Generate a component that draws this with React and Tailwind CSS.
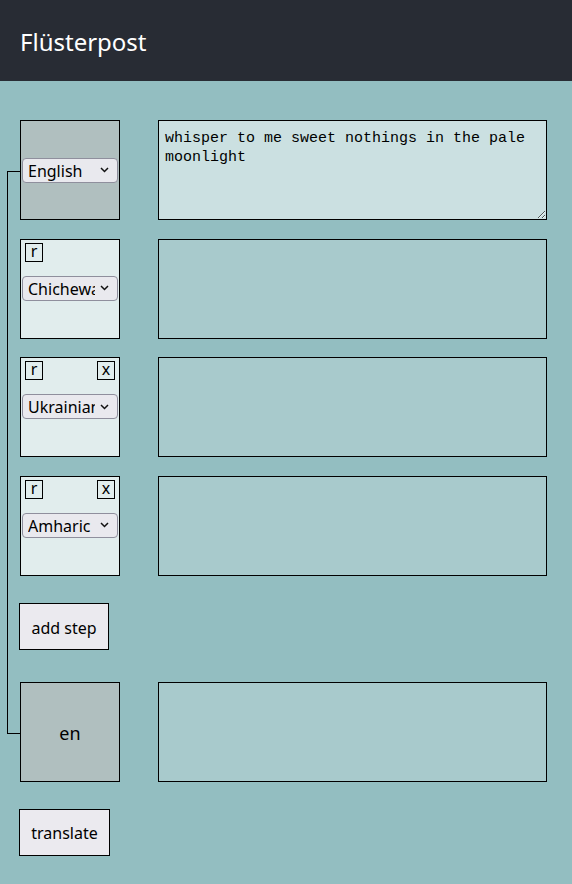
import React, { useState } from 'react';

const LANGS = ['English', 'Chichewa', 'Ukrainian', 'Amharic', 'German', 'French', 'Japanese'];

const Chevron = () => (
    <svg className="pointer-events-none absolute right-[9px] top-1/2 -translate-y-1/2" width="9" height="6" viewBox="0 0 9 6" fill="none">
        <path d="M1 1l3.5 3.5L8 1" stroke="#111" strokeWidth="1.5" />
    </svg>
);

const LangSelect = ({ value, onChange }) => (
    <div className="relative w-[96px]">
        <select
            value={value}
            onChange={(e) => onChange(e.target.value)}
            className="appearance-none w-full h-[25px] pl-[5px] pr-[22px] pt-px text-[16px] leading-[22px] bg-[#e9e9ee] border border-[#8f8f9d] rounded-[4px] text-black"
        >
            {LANGS.map((l) => (
                <option key={l} value={l}>{l}</option>
            ))}
        </select>
        <Chevron />
    </div>
);

const SmallBtn = ({ children }) => (
    <button className="w-[18px] h-[19px] border border-black text-[16px] leading-[15px] flex items-center justify-center pb-[2px] text-black">
        {children}
    </button>
);

export default function App() {
    const [source, setSource] = useState('English');
    const [steps, setSteps] = useState(['Chichewa', 'Ukrainian', 'Amharic']);
    const [text, setText] = useState('whisper to me sweet nothings in the pale moonlight');

    return (
        <div className="min-h-[884px] bg-[#93bec1] font-['Noto_Sans','Open_Sans',sans-serif] text-black">
            {/* header */}
            <header className="h-[81px] bg-[#282c34] flex items-center pl-5">
                <h1 className="text-[24px] text-white pt-[3px]">Flüsterpost</h1>
            </header>

            <main className="relative pl-[19px] pt-[39px] pb-[28px]">
                {/* connector line */}
                <div className="absolute left-[7px] top-[90px] w-[13px] h-[563px] border-l border-t border-b border-black" />

                <div className="flex flex-col gap-[18.67px]">
                    {/* source row */}
                    <div className="flex gap-[38px] ml-px">
                        <div className="w-[100px] h-[100px] border border-black bg-[#b0bfbf] flex items-center justify-center">
                            <LangSelect value={source} onChange={setSource} />
                        </div>
                        <textarea
                            value={text}
                            onChange={(e) => setText(e.target.value)}
                            className="w-[389px] h-[100px] border border-black bg-[#cbe0e1] px-[6px] pt-[8px] font-['Liberation_Mono',monospace] text-[15px] leading-[19px] outline-none"
                        />
                    </div>

                    {steps.map((lang, i) => (
                        <div key={i} className="flex gap-[38px] ml-px">
                            <div className="w-[100px] h-[100px] border border-black bg-[#e1eded] flex flex-col">
                                <div className="flex justify-between mt-[3px] mx-[4px]">
                                    <SmallBtn>r</SmallBtn>
                                    {i > 0 && <SmallBtn>x</SmallBtn>}
                                </div>
                                <div className="mt-[14px] ml-px">
                                    <LangSelect
                                        value={lang}
                                        onChange={(v) => setSteps((prev) => prev.map((p, j) => (j === i ? v : p)))}
                                    />
                                </div>
                            </div>
                            <div className="w-[389px] h-[100px] border border-black bg-[#a8cacc]" />
                        </div>
                    ))}
                </div>

                <button
                    onClick={() => setSteps((prev) => [...prev, 'German'])}
                    className="mt-[27px] w-[90px] h-[47px] pt-[3px] border border-black bg-[#ebeaef] text-[16px]"
                >
                    add step
                </button>

                <div className="flex gap-[38px] ml-px mt-[32px]">
                    <div className="w-[100px] h-[100px] pt-[3px] border border-black bg-[#b0bfbf] flex items-center justify-center text-[18px]">
                        en
                    </div>
                    <div className="w-[389px] h-[100px] border border-black bg-[#a8cacc]" />
                </div>

                <button className="block mt-[27px] w-[91px] h-[47px] pt-[2px] border border-black bg-[#ebeaef] text-[16px]">
                    translate
                </button>
            </main>
        </div>
    );
}
